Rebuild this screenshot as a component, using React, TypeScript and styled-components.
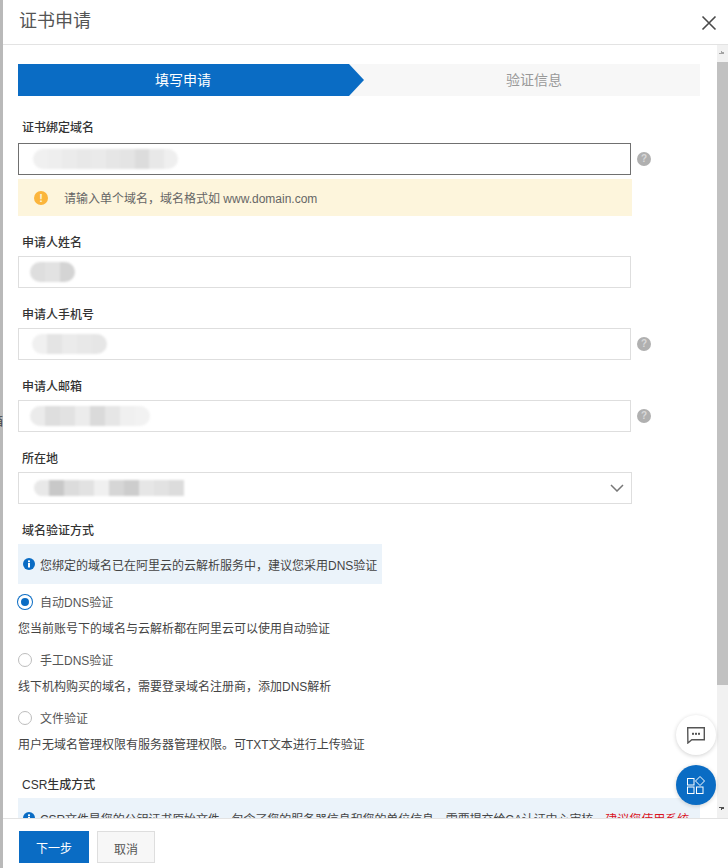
import React from "react";
import styled, {createGlobalStyle} from "styled-components";

const GlobalStyle = createGlobalStyle`
    html, body {
        margin: 0;
        padding: 0;
        height: 100%;
        overflow: hidden;
        background: #b9b9b9;
        font-family: "Liberation Sans", "Noto Sans CJK SC", sans-serif;
    }
    * {
        box-sizing: border-box;
    }
`

type FieldData = {
    label: string
    left: number
    cells: Array<string>
    hint?: boolean
}

const fields: Array<FieldData> = [
    {label: "申请人姓名", left: 11, cells: ["#dedede", "#e2e2e2", "#d4d4d4"]},
    {label: "申请人手机号", left: 13, hint: true, cells: ["#f0f0f0", "#e4e4e4", "#ebebeb", "#e8e8e8", "#e6e6e6"]},
    {label: "申请人邮箱", left: 11, hint: true, cells: ["#ebebeb", "#dedede", "#e2e2e2", "#ececec", "#dadada", "#e6e6e6", "#f0f0f0", "#f2f2f2"]},
]

const domainCells = ["#f0f0f0", "#eeeeee", "#ebebeb", "#e8e8e8", "#eaeaea", "#e6e6e6", "#e4e4e4", "#dcdcdc", "#e8e8e8", "#efefef"]
const selectCells = ["#e8e8e8", "#c8c8c8", "#dcdcdc", "#e2e2e2", "#f0f0f0", "#d6d6d6", "#cdcdcd", "#e6e6e6", "#e2e2e2", "#dcdcdc"]

const methods = [
    {label: "自动DNS验证", desc: "您当前账号下的域名与云解析都在阿里云可以使用自动验证", checked: true},
    {label: "手工DNS验证", desc: "线下机构购买的域名，需要登录域名注册商，添加DNS解析", checked: false},
    {label: "文件验证", desc: "用户无域名管理权限有服务器管理权限。可TXT文本进行上传验证", checked: false},
]

type RedactionProps = {
    cells: Array<string>
    left: number
    cellWidth?: number
    height?: number
    radius?: string
}

const Redaction: React.FunctionComponent<RedactionProps> = ({cells, left, cellWidth = 15, height = 20, radius = "10px"})=>{
    return (
        <Blur $left={left} $height={height} $radius={radius}>
            {cells.map((color, index)=>(
                <BlurCell key={index} $color={color} $width={cellWidth}/>
            ))}
        </Blur>
    )
}

const HelpIcon = ()=>(
    <Help>?</Help>
)

const InfoIcon = ()=>(
    <InfoDot>
        <svg width="12" height="12" viewBox="0 0 12 12">
            <circle cx="6" cy="6" r="6" fill="#0a6cc4"/>
            <rect x="5" y="5" width="2" height="4.5" fill="#fff"/>
            <rect x="5" y="2.4" width="2" height="1.8" fill="#fff"/>
        </svg>
    </InfoDot>
)

export default function App() {
    return (
        <>
            <GlobalStyle/>
            <Page>
                <BackdropText>箱</BackdropText>
                <Drawer>
                    <Header>
                        <Title>证书申请</Title>
                        <CloseIcon width="16" height="16" viewBox="0 0 16 16">
                            <path d="M1.5 1.5 L14.5 14.5 M14.5 1.5 L1.5 14.5" stroke="#4a4a4a" strokeWidth="1.6" fill="none"/>
                        </CloseIcon>
                    </Header>
                    <Body>
                        <Content>
                            <Steps>
                                <ActiveStep>填写申请</ActiveStep>
                                <NextStep>验证信息</NextStep>
                            </Steps>

                            <FirstLabel>证书绑定域名</FirstLabel>
                            <FieldRow>
                                <Input $focused>
                                    <Redaction left={14} cells={domainCells} cellWidth={14.5}/>
                                </Input>
                                <HelpIcon/>
                            </FieldRow>
                            <Warning>
                                <WarningDot>!</WarningDot>
                                请输入单个域名，域名格式如 www.domain.com
                            </Warning>

                            {fields.map((field)=>(
                                <React.Fragment key={field.label}>
                                    <Label>{field.label}</Label>
                                    <FieldRow>
                                        <Input>
                                            <Redaction left={field.left} cells={field.cells}/>
                                        </Input>
                                        {field.hint && <HelpIcon/>}
                                    </FieldRow>
                                </React.Fragment>
                            ))}

                            <Label>所在地</Label>
                            <Select>
                                <Redaction left={15} cells={selectCells} height={16} radius="8px 0 0 8px"/>
                                <svg width="14" height="8" viewBox="0 0 14 8">
                                    <path d="M1 1 L7 7 L13 1" stroke="#777" strokeWidth="1.5" fill="none"/>
                                </svg>
                            </Select>

                            <Label>域名验证方式</Label>
                            <Notice>
                                <InfoIcon/>
                                您绑定的域名已在阿里云的云解析服务中，建议您采用DNS验证
                            </Notice>
                            {methods.map((method)=>(
                                <Method key={method.label}>
                                    <RadioRow>
                                        <Radio $checked={method.checked}/>
                                        <RadioText>{method.label}</RadioText>
                                    </RadioRow>
                                    <Description>{method.desc}</Description>
                                </Method>
                            ))}

                            <Label>CSR生成方式</Label>
                            <CsrNotice>
                                <InfoIcon/>
                                CSR文件是您的公钥证书原始文件，包含了您的服务器信息和您的单位信息，需要提交给CA认证中心审核。
                                <Red>建议您使用系统</Red>
                            </CsrNotice>
                        </Content>
                        <Scrollbar>
                            <ArrowUp/>
                            <Thumb/>
                            <TrackFill/>
                            <ArrowDown/>
                        </Scrollbar>
                        <ChatButton>
                            <svg width="18" height="17" viewBox="0 0 18 17">
                                <path d="M0.7 0.7 H17.3 V12.8 H4.8 L0.9 16 Z" stroke="#555" strokeWidth="1.4" fill="none"/>
                                <rect x="5" y="5.8" width="2" height="2" fill="#555"/>
                                <rect x="8" y="5.8" width="2" height="2" fill="#555"/>
                                <rect x="11" y="5.8" width="2" height="2" fill="#555"/>
                            </svg>
                        </ChatButton>
                        <AppsButton>
                            <svg width="18" height="18" viewBox="0 0 18 18">
                                <rect x="0.5" y="2.5" width="6.5" height="6.5" stroke="#fff" strokeWidth="1" fill="none"/>
                                <rect x="0.5" y="11" width="6.5" height="6.5" stroke="#fff" strokeWidth="1" fill="none"/>
                                <rect x="9.5" y="11" width="6.5" height="6.5" stroke="#fff" strokeWidth="1" fill="none"/>
                                <path d="M13 0.5 L17.5 5 L13 9.5 L8.5 5 Z" stroke="#fff" strokeWidth="1" fill="none"/>
                            </svg>
                        </AppsButton>
                    </Body>
                    <Footer>
                        <PrimaryButton>下一步</PrimaryButton>
                        <CancelButton>取消</CancelButton>
                    </Footer>
                </Drawer>
            </Page>
        </>
    )
}

const Page = styled.div`
    position: relative;
    width: 728px;
    height: 868px;
    padding-left: 3px;
    overflow: hidden;
`
const BackdropText = styled.span`
    position: absolute;
    left: -9px;
    top: 414px;
    font-size: 12px;
    line-height: 16px;
    color: #444;
`
const Drawer = styled.div`
    position: relative;
    width: 725px;
    height: 868px;
    background: #fff;
    display: flex;
    flex-direction: column;
    color: #333;
`
const Header = styled.div`
    height: 45px;
    flex: none;
    display: flex;
    align-items: center;
    justify-content: space-between;
    padding: 0 11px 0 16px;
    border-bottom: 1px solid #e3e3e3;
`
const Title = styled.div`
    font-size: 18px;
    color: #555;
    line-height: 24px;
    margin-top: -2px;
`
const CloseIcon = styled.svg`
    margin-top: 2px;
`
const Body = styled.div`
    height: 773px;
    flex: none;
    display: flex;
    position: relative;
    overflow: hidden;
`
const Content = styled.div`
    width: 714px;
    flex: none;
    padding: 19px 0 0 15px;
    overflow: hidden;
`
const Steps = styled.div`
    width: 682px;
    height: 32px;
    display: flex;
    background: #f7f7f7;
    font-size: 14px;
    line-height: 33px;
`
const ActiveStep = styled.div`
    width: 346px;
    text-align: center;
    color: #fff;
    background: #0a6cc4;
    clip-path: polygon(0 0, 331px 0, 100% 50%, 331px 100%, 0 100%);
    padding-right: 16px;
`
const NextStep = styled.div`
    flex: 1;
    text-align: center;
    color: #999;
    padding-left: 4px;
`
const Label = styled.div`
    font-size: 12px;
    font-weight: 500;
    line-height: 20px;
    height: 18px;
    color: #333;
    padding-left: 4px;
    margin-top: 17px;
    margin-bottom: 5px;
`
const FirstLabel = styled(Label)`
    margin-top: 22px;
    margin-bottom: 7px;
`
const FieldRow = styled.div`
    display: flex;
    align-items: center;
    gap: 6px;
`
const Input = styled.div<{$focused?: boolean}>`
    width: 613px;
    height: 32px;
    flex: none;
    border: 1px solid ${({$focused})=>($focused ? "#707070" : "#dedede")};
    display: flex;
    align-items: center;
`
const Blur = styled.div<{$left: number, $height: number, $radius: string}>`
    display: flex;
    height: ${({$height})=>$height}px;
    margin-left: ${({$left})=>$left}px;
    border-radius: ${({$radius})=>$radius};
    overflow: hidden;
    filter: blur(1px);
`
const BlurCell = styled.div<{$color: string, $width: number}>`
    width: ${({$width})=>$width}px;
    height: 100%;
    background: ${({$color})=>$color};
`
const Help = styled.span`
    width: 14px;
    height: 14px;
    border-radius: 50%;
    background: #b0b0b0;
    color: #d8d8d8;
    font-size: 10px;
    font-weight: 700;
    line-height: 14px;
    text-align: center;
`
const Warning = styled.div`
    width: 614px;
    height: 37px;
    margin-top: 4px;
    background: #fdf5dc;
    display: flex;
    align-items: center;
    padding-left: 16px;
    font-size: 12px;
    color: #666;
    white-space: pre;
`
const WarningDot = styled.span`
    width: 14px;
    height: 14px;
    border-radius: 50%;
    background: #fbb53c;
    color: #fdf5dc;
    font-size: 11px;
    font-weight: 700;
    line-height: 14px;
    text-align: center;
    margin-right: 16px;
`
const Select = styled.div`
    width: 614px;
    height: 32px;
    border: 1px solid #dedede;
    display: flex;
    align-items: center;
    justify-content: space-between;
    padding-right: 7px;
`
const Notice = styled.div`
    display: flex;
    align-items: center;
    width: 364px;
    height: 40px;
    background: #ebf3fa;
    padding-left: 5px;
    font-size: 12px;
    color: #444;
    white-space: nowrap;
`
const InfoDot = styled.span`
    display: flex;
    margin-right: 5px;
`
const Method = styled.div`
    margin-top: 8px;
    height: 50px;
`
const RadioRow = styled.div`
    display: flex;
    align-items: center;
    height: 20px;
    gap: 6px;
    font-size: 12px;
    color: #555;
`
const RadioText = styled.span`
    margin-top: -2px;
`
const Radio = styled.span<{$checked: boolean}>`
    width: 14px;
    height: 14px;
    border-radius: 50%;
    background: ${({$checked})=>($checked ? "#0a6cc4" : "#fff")};
    border: ${({$checked})=>($checked ? "3px solid #fff" : "1px solid #bdbdbd")};
    box-shadow: ${({$checked})=>($checked ? "0 0 0 1px #0a6cc4" : "none")};
    margin-right: 2px;
`
const Description = styled.div`
    font-size: 12px;
    line-height: 18px;
    margin-top: 8px;
    color: #444;
    white-space: nowrap;
`
const CsrNotice = styled.div`
    width: 682px;
    height: 40px;
    display: flex;
    align-items: center;
    background: #ebf3fa;
    padding-left: 5px;
    font-size: 12px;
    color: #444;
    white-space: nowrap;
    overflow: hidden;
    letter-spacing: -0.1px;
`
const Red = styled.span`
    color: #d9141e;
    letter-spacing: 0;
`
const Scrollbar = styled.div`
    width: 11px;
    flex: none;
    background: #f1f1f1;
    display: flex;
    flex-direction: column;
`
const ArrowUp = styled.div`
    height: 17px;
    flex: none;
    background:
        linear-gradient(to bottom right, transparent 50%, #a3a3a3 50%) 2px 6px / 3px 3px no-repeat,
        linear-gradient(to bottom left, transparent 50%, #a3a3a3 50%) 5px 6px / 3px 3px no-repeat;
`
const Thumb = styled.div`
    height: 623px;
    flex: none;
    background: #c1c1c1;
`
const TrackFill = styled.div`
    flex: 1;
`
const ArrowDown = styled.div`
    height: 17px;
    flex: none;
    background:
        linear-gradient(to top right, transparent 50%, #505050 50%) 2px 6px / 3px 3px no-repeat,
        linear-gradient(to top left, transparent 50%, #505050 50%) 5px 6px / 3px 3px no-repeat;
`
const ChatButton = styled.div`
    position: absolute;
    left: 673px;
    top: 670px;
    width: 40px;
    height: 40px;
    border-radius: 50%;
    background: #fff;
    box-shadow: 0 1px 4px rgba(0, 0, 0, 0.18);
    display: flex;
    align-items: center;
    justify-content: center;
`
const AppsButton = styled.div`
    position: absolute;
    left: 673px;
    top: 720px;
    width: 40px;
    height: 40px;
    border-radius: 50%;
    background: #0a6cc4;
    box-shadow: 0 1px 4px rgba(0, 0, 0, 0.18);
    display: flex;
    align-items: center;
    justify-content: center;
`
const Footer = styled.div`
    flex: 1;
    border-top: 1px solid #e3e3e3;
    display: flex;
    align-items: flex-start;
    gap: 8px;
    padding: 12px 0 0 16px;
`
const PrimaryButton = styled.div`
    width: 70px;
    height: 32px;
    background: #0a6cc4;
    color: #fff;
    font-size: 12px;
    line-height: 37px;
    text-align: center;
`
const CancelButton = styled.div`
    width: 58px;
    height: 32px;
    background: #f7f7f7;
    border: 1px solid #dedede;
    color: #555;
    font-size: 12px;
    line-height: 36px;
    text-align: center;
`
